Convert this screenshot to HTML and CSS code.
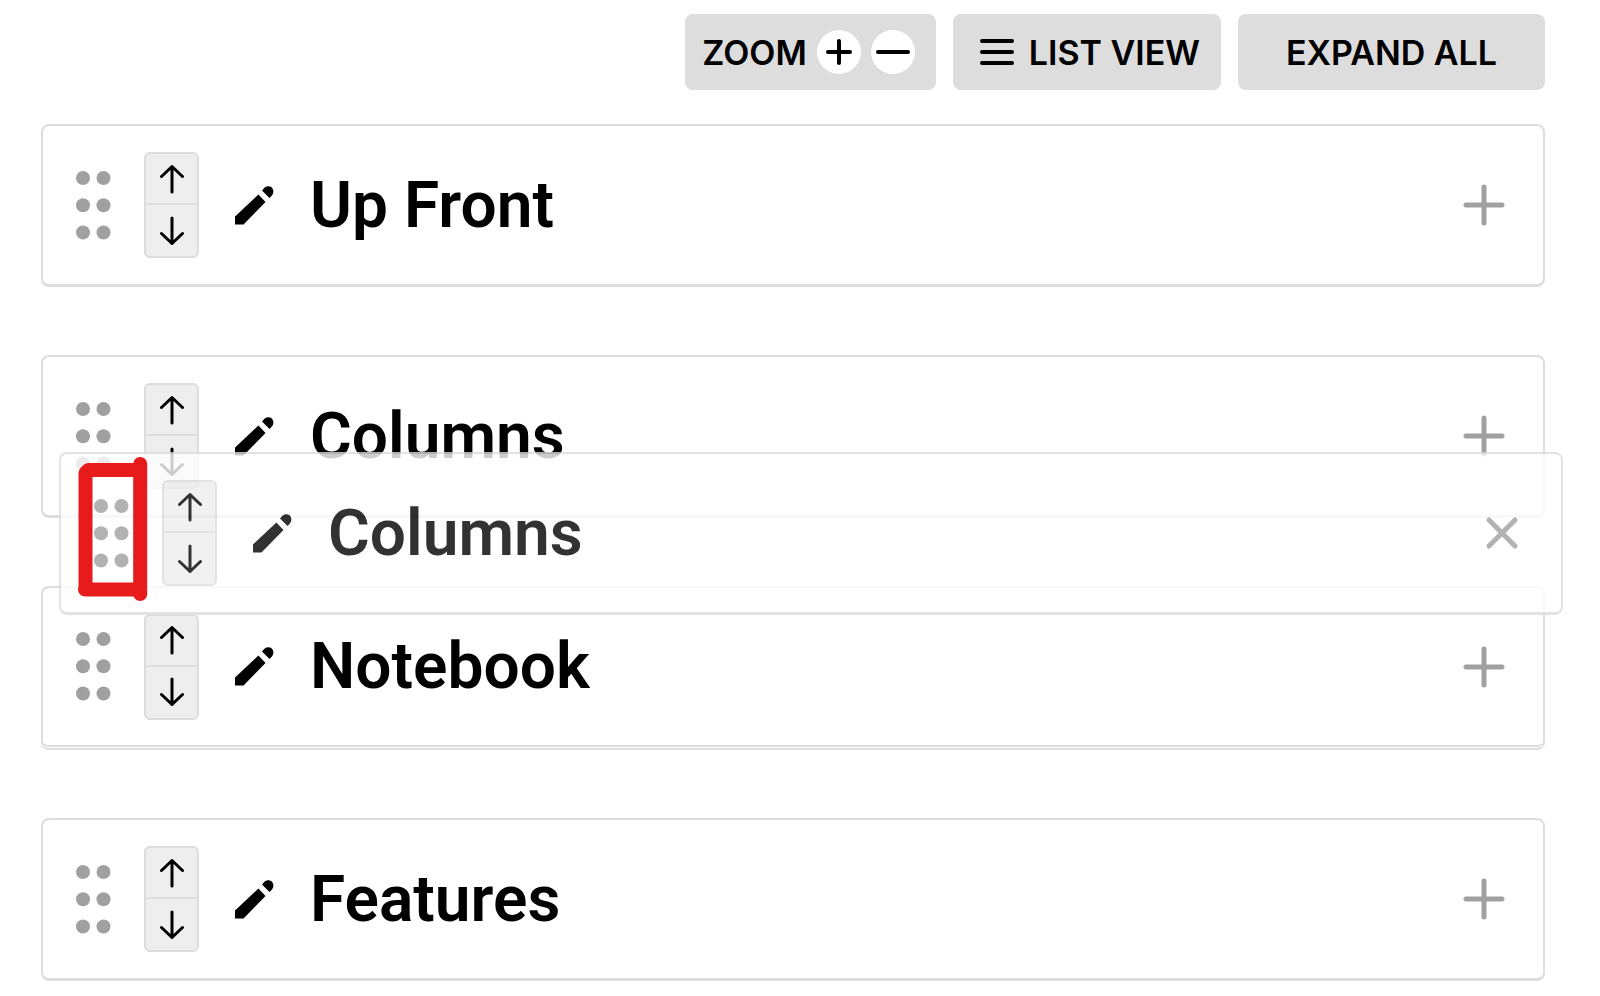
FILE: index.html
```html
<!DOCTYPE html>
<html lang="en">
<head>
    <meta charset="UTF-8">
    <meta name="viewport" content="width=device-width, initial-scale=1.0">
    <title>Sections</title>
    <link rel="stylesheet" href="styles.css">
</head>
<body>

    <!-- Shared icons -->
    <svg class="sprite" aria-hidden="true">
        <symbol id="dots" viewBox="0 0 35 69">
            <circle cx="7" cy="7" r="7"/><circle cx="27.5" cy="7" r="7"/>
            <circle cx="7" cy="34.3" r="7"/><circle cx="27.5" cy="34.3" r="7"/>
            <circle cx="7" cy="61.5" r="7"/><circle cx="27.5" cy="61.5" r="7"/>
        </symbol>
        <symbol id="up" viewBox="0 0 24 30">
            <path d="M12 28V2.5M1.500 12.5L12 2.5l10.500 10"/>
        </symbol>
        <symbol id="down" viewBox="0 0 24 30">
            <path d="M12 2v25.500M1.500 17.500l10.500 10 10.500-10"/>
        </symbol>
        <symbol id="pencil" viewBox="0 0 39 39">
            <path d="M0 30.500V38.500h8.500L30.500 16 23.400 8.500z"/>
            <path d="M27 4.500l2-2.300C32-.8 36-.2 37.500 2.500c1.500 2.300 1 5-.8 7.200L34.500 12z"/>
        </symbol>
        <symbol id="plus" viewBox="0 0 42 42">
            <path d="M21 3v36M3 21h36"/>
        </symbol>
        <symbol id="close" viewBox="0 0 42 42">
            <path d="M8 8l26 26M34 8L8 34"/>
        </symbol>
    </svg>

    <!-- Toolbar -->
    <div class="toolbar">
        <div class="tool zoom" role="group" aria-label="Zoom">
            <span>ZOOM</span>
            <button class="round" type="button" aria-label="Zoom in">
                <svg viewBox="0 0 44 44"><path d="M22 11v22M11 22h22"/></svg>
            </button>
            <button class="round" type="button" aria-label="Zoom out">
                <svg viewBox="0 0 44 44"><path d="M7 22h30"/></svg>
            </button>
        </div>
        <button class="tool list-view" type="button">
            <svg viewBox="0 0 34 28"><path d="M2 3h30M2 14h30M2 25h30"/></svg>
            LIST VIEW
        </button>
        <button class="tool expand" type="button">EXPAND ALL</button>
    </div>

    <!-- Sections -->
    <ul class="sections">
        <li>
            <div class="card">
                <svg class="handle"><use href="#dots"/></svg>
                <div class="move">
                    <button type="button" aria-label="Move up"><svg><use href="#up"/></svg></button>
                    <button type="button" aria-label="Move down"><svg><use href="#down"/></svg></button>
                </div>
                <button class="edit" type="button" aria-label="Edit"><svg><use href="#pencil"/></svg></button>
                <h2>Up Front</h2>
                <button class="toggle" type="button" aria-label="Expand"><svg><use href="#plus"/></svg></button>
            </div>
        </li>
        <li>
            <div class="card">
                <svg class="handle"><use href="#dots"/></svg>
                <div class="move">
                    <button type="button" aria-label="Move up"><svg><use href="#up"/></svg></button>
                    <button type="button" aria-label="Move down"><svg><use href="#down"/></svg></button>
                </div>
                <button class="edit" type="button" aria-label="Edit"><svg><use href="#pencil"/></svg></button>
                <h2>Columns</h2>
                <button class="toggle" type="button" aria-label="Expand"><svg><use href="#plus"/></svg></button>
            </div>

            <!-- Copy of the card while it is dragged -->
            <div class="card dragging">
                <svg class="handle"><use href="#dots"/></svg>
                <div class="move">
                    <button type="button" aria-label="Move up"><svg><use href="#up"/></svg></button>
                    <button type="button" aria-label="Move down"><svg><use href="#down"/></svg></button>
                </div>
                <button class="edit" type="button" aria-label="Edit"><svg><use href="#pencil"/></svg></button>
                <h2>Columns</h2>
                <button class="toggle" type="button" aria-label="Close"><svg><use href="#close"/></svg></button>
            </div>

            <!-- Red marker around the handle -->
            <svg class="marker" viewBox="0 0 74 148">
                <path d="M8.500 134V18l3-3H63M63.200 9v130M8 134.500h55"/>
            </svg>
        </li>
        <li>
            <div class="card target">
                <svg class="handle"><use href="#dots"/></svg>
                <div class="move">
                    <button type="button" aria-label="Move up"><svg><use href="#up"/></svg></button>
                    <button type="button" aria-label="Move down"><svg><use href="#down"/></svg></button>
                </div>
                <button class="edit" type="button" aria-label="Edit"><svg><use href="#pencil"/></svg></button>
                <h2>Notebook</h2>
                <button class="toggle" type="button" aria-label="Expand"><svg><use href="#plus"/></svg></button>
            </div>
        </li>
        <li>
            <div class="card">
                <svg class="handle"><use href="#dots"/></svg>
                <div class="move">
                    <button type="button" aria-label="Move up"><svg><use href="#up"/></svg></button>
                    <button type="button" aria-label="Move down"><svg><use href="#down"/></svg></button>
                </div>
                <button class="edit" type="button" aria-label="Edit"><svg><use href="#pencil"/></svg></button>
                <h2>Features</h2>
                <button class="toggle" type="button" aria-label="Expand"><svg><use href="#plus"/></svg></button>
            </div>
        </li>
    </ul>

</body>
</html>
```
FILE: styles.css
```css
* {
    box-sizing: border-box;
}
body {
    margin: 0;
    padding: 14px 55px 14px 41px;
    background-color: white;
    color: black;
    font-family: Roboto, sans-serif;
}
button {
    padding: 0;
    border: none;
    background: none;
    color: inherit;
    font: inherit;
    cursor: pointer;
}
svg {
    display: block;
    fill: none;
    stroke: black;
    stroke-width: 3px;
    stroke-linecap: round;
    stroke-linejoin: round;
}
.sprite {
    display: none;
}

/* Toolbar */
.toolbar {
    display: flex;
    justify-content: flex-end;
    gap: 17px;
    margin-bottom: 34px;
}
.tool {
    display: flex;
    align-items: center;
    justify-content: center;
    height: 76px;
    padding: 0 21px;
    border-radius: 8px;
    background-color: #ddd;
    font-family: Inter, sans-serif;
    font-size: 34px;
    font-weight: 600;
}
.zoom {
    gap: 10px;
    padding-left: 17px;
}
.round {
    width: 44px;
    height: 44px;
    border-radius: 50%;
    background-color: white;
}
.round svg {
    width: 44px;
    height: 44px;
    stroke-width: 4px;
}
.list-view {
    gap: 15px;
    padding-left: 27px;
}
.list-view svg {
    width: 34px;
    height: 28px;
    stroke-width: 4px;
}
.expand {
    min-width: 307px;
}

/* Section cards */
.sections {
    display: flex;
    flex-direction: column;
    gap: 68px;
    margin: 0;
    padding: 0;
    list-style: none;
}
.sections li {
    position: relative;
}
.card {
    display: flex;
    align-items: center;
    gap: 33px;
    height: 163px;
    padding: 0 38px 0 33px;
    border: 2px solid #ddd;
    border-bottom-width: 3px;
    border-radius: 8px;
    background-color: white;
}
.target {
    height: 164px;
    border-bottom: 5px double #ddd;
}
.handle {
    width: 35px;
    height: 69px;
    fill: #a0a0a0;
    stroke: none;
}
.move {
    width: 55px;
    border: 2px solid #ddd;
    border-radius: 6px;
    background-color: #eee;
}
.move button {
    display: flex;
    align-items: center;
    justify-content: center;
    width: 100%;
    height: 49px;
}
.move button + button {
    height: 53px;
    border-top: 2px solid #ddd;
}
.move svg {
    width: 24px;
    height: 30px;
}
.edit {
    margin: 0 3px;
}
.edit svg {
    width: 39px;
    height: 39px;
    fill: black;
    stroke: none;
}
h2 {
    flex: 1;
    margin: 0;
    font-size: 64px;
    font-weight: 600;
    line-height: 75px;
}
.toggle svg {
    width: 42px;
    height: 42px;
    stroke: #a0a0a0;
    stroke-width: 5px;
}

/* Dragged card and the marker lie over the list */
.dragging {
    position: absolute;
    top: 97px;
    left: 18px;
    z-index: 1;
    width: 100%;
    opacity: 0.8;
}
.marker {
    position: absolute;
    top: 100px;
    left: 36px;
    z-index: 2;
    width: 74px;
    height: 148px;
    stroke: #e71b1b;
    stroke-width: 14px;
}
```
